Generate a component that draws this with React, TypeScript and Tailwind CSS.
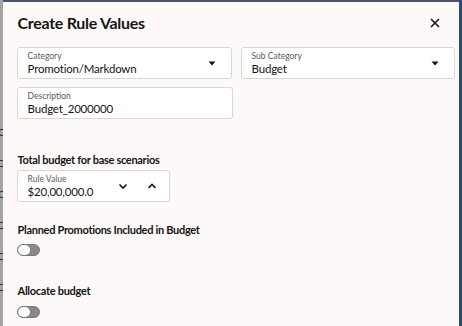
import React from 'react';

const Caret = () => (
  <svg width="10" height="10" viewBox="0 0 10 10" className="shrink-0">
    <path d="M1.5 3.5 L8.5 3.5 L5 7.5 Z" fill="#161513" />
  </svg>
);

const Chevron = ({ up }: { up?: boolean }) => (
  <svg width="10" height="8" viewBox="0 0 10 8">
    <path
      d={up ? 'M1.5 6 L5 2.5 L8.5 6' : 'M1.5 2.5 L5 6 L8.5 2.5'}
      fill="none"
      stroke="#161513"
      strokeWidth="1.6"
    />
  </svg>
);

interface FieldProps {
  label: string;
  value: string;
  select?: boolean;
  className?: string;
  children?: React.ReactNode;
}

const Field: React.FC<FieldProps> = ({ label, value, select, className, children }) => (
  <div
    className={`h-[32px] flex items-center bg-white border border-[#d9d6d3] rounded-[3px] pl-[10px] pr-[14px] ${className ?? ''}`}
  >
    <div className="flex-1 flex flex-col pt-[1px]">
      <span className="text-[8.5px] text-[#5c5a57] leading-[10px]">{label}</span>
      <span className="text-[11.5px] text-[#161513] leading-[15px] tracking-[-0.2px]">{value}</span>
    </div>
    {select && <Caret />}
    {children}
  </div>
);

const Toggle = () => (
  <div className="w-[23px] h-[12px] rounded-full border border-[#7a7876] bg-[#8a8886] flex items-center overflow-hidden">
    <div className="w-[12px] h-full bg-white rounded-full" />
  </div>
);

export default function App() {
  return (
    <div
      className="w-[462px] h-[326px] flex overflow-hidden bg-[#fcf9f8]"
      style={{ fontFamily: 'Lato, "Noto Sans", sans-serif' }}
    >
      <div className="w-[3px] bg-[#a3a3a3] flex flex-col pt-[127px] gap-[21px] overflow-hidden text-[10px] text-[#222] leading-none">
        <span className="-ml-[2px]">C</span>
        <span className="-ml-[3px]">C</span>
        <span className="-ml-[2px]">C</span>
        <span className="-ml-[3px]">C</span>
        <span className="-ml-[3px]">C</span>
        <span className="-ml-[3px]">C</span>
      </div>
      <div className="flex-1 border-t-2 border-[#4d5466] pl-[14px] pr-[4px] text-[#161513]">
        <div className="flex items-center justify-between h-[40px] pt-[2px]">
          <h1 className="text-[16px] font-bold tracking-[-0.3px] pl-px">Create Rule Values</h1>
          <svg width="12" height="12" viewBox="0 0 12 12" className="mr-[14px]">
            <path d="M2 2 L10 10 M10 2 L2 10" stroke="#161513" strokeWidth="1.6" />
          </svg>
        </div>
        <div className="flex gap-[9px] mt-[5px]">
          <Field label="Category" value="Promotion/Markdown" select className="w-[215px]" />
          <Field label="Sub Category" value="Budget" select className="w-[214px]" />
        </div>
        <Field label="Description" value="Budget_2000000" className="w-[216px] mt-[8px]" />
        <h2 className="text-[11px] font-bold mt-[33px] leading-[16px] tracking-[-0.3px] pl-px">Total budget for base scenarios</h2>
        <Field label="Rule Value" value="$20,00,000.0" className="w-[153px] mt-[2px] !pr-[12px]">
          <div className="flex items-center gap-[19px]">
            <Chevron />
            <Chevron up />
          </div>
        </Field>
        <h2 className="text-[11px] font-bold mt-[20px] leading-[16px] tracking-[-0.3px] pl-px">Planned Promotions Included in Budget</h2>
        <div className="mt-[6px]">
          <Toggle />
        </div>
        <h2 className="text-[11px] font-bold mt-[27px] leading-[16px] tracking-[-0.3px] pl-px">Allocate budget</h2>
        <div className="mt-[7px]">
          <Toggle />
        </div>
      </div>
      <div className="w-px bg-[#d4d4d4]" />
      <div className="w-[3px] bg-[#1f4f82]" />
    </div>
  );
}
